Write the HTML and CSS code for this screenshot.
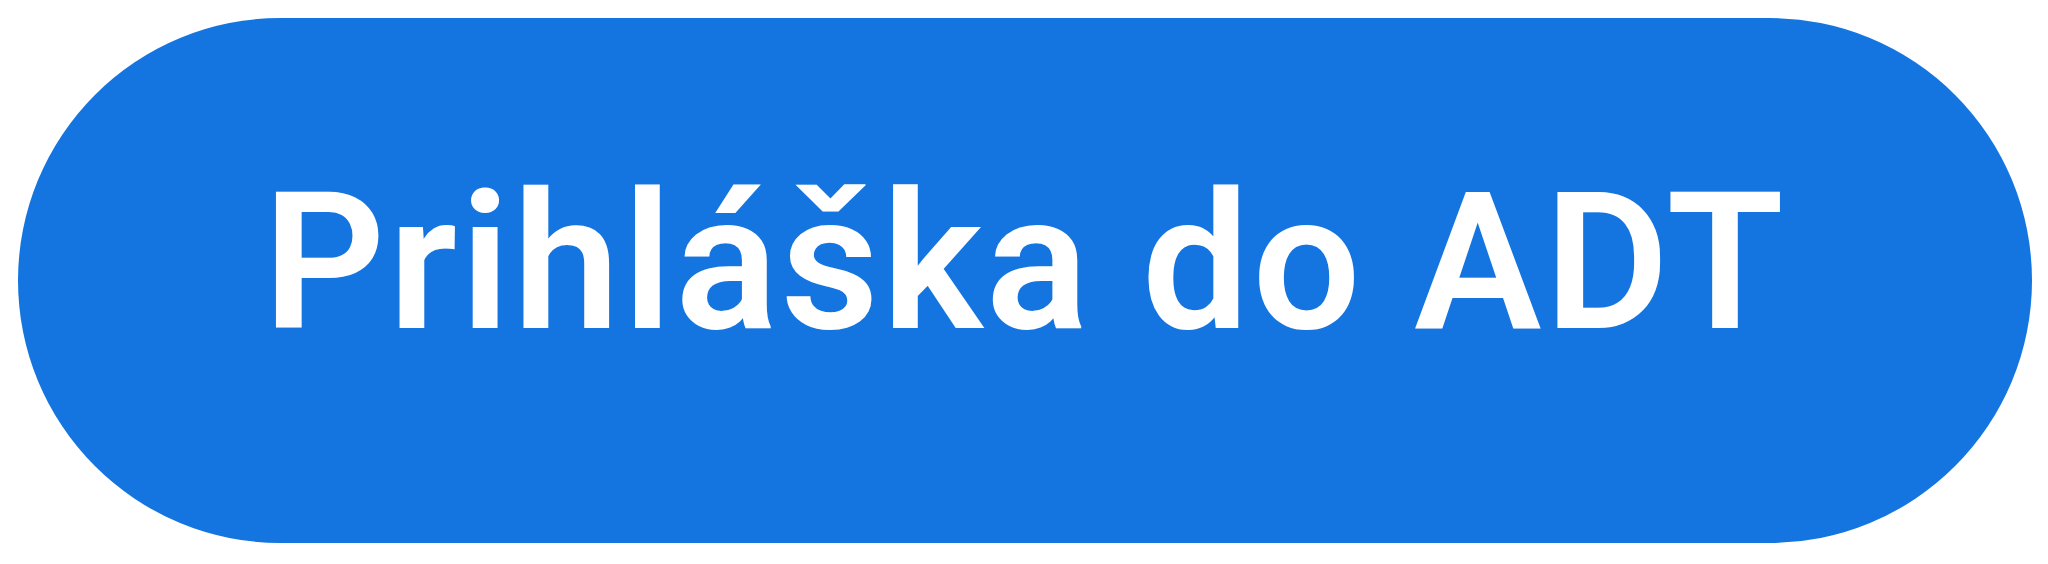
FILE: index.html
```html
<!DOCTYPE html>
<html lang="sk">
<head>
    <meta charset="UTF-8">
    <meta name="viewport" content="width=device-width, initial-scale=1.0">
    <title>Prihláška do ADT</title>
    <link rel="stylesheet" href="styles.css">
</head>
<body>
    <div class="wrap">
        <a class="apply-btn" href="#">Prihláška do ADT</a>
    </div>
</body>
</html>
```

FILE: styles.css
```css
body {
    margin: 0;
    background-color: #ffffff;
    font-family: Roboto, "Open Sans", Arial, sans-serif;
}
.wrap {
    padding: 18px 16px 21px 18px;
}
.apply-btn {
    display: flex;
    align-items: center;
    justify-content: center;
    height: 525px;
    padding-bottom: 36px;
    box-sizing: border-box;
    background-color: #1475e1;
    color: #ffffff;
    border-radius: 9999px;
    font-size: 191px;
    font-weight: 600;
    letter-spacing: 3px;
    text-decoration: none;
}
```
